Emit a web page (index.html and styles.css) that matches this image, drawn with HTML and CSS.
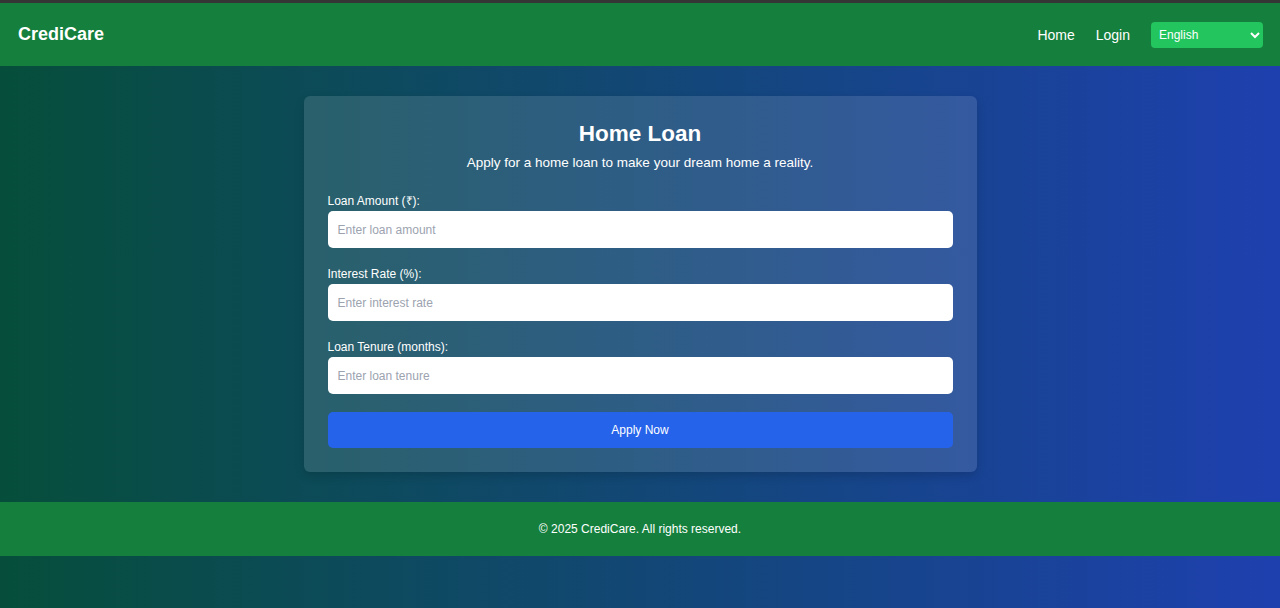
FILE: index.html
```html
<!DOCTYPE html>
<html lang="en">
<head>
<meta charset="utf-8">
<title>Home Loan - CrediCare</title>
<link rel="stylesheet" href="styles.css">
</head>
<body>
<header class="site-header">
  <div class="brand">CrediCare</div>
  <nav class="nav">
    <a href="#" class="nav-link">Home</a>
    <a href="#" class="nav-link">Login</a>
    <select class="lang">
      <option>English</option>
      <option>हिन्दी</option>
    </select>
  </nav>
</header>
<main class="main">
  <section class="card">
    <h1 class="title">Home Loan</h1>
    <p class="subtitle">Apply for a home loan to make your dream home a reality.</p>
    <form class="form">
      <div class="field">
        <label class="label">Loan Amount (₹):</label>
        <input class="input" type="number" placeholder="Enter loan amount">
      </div>
      <div class="field">
        <label class="label">Interest Rate (%):</label>
        <input class="input" type="number" placeholder="Enter interest rate">
      </div>
      <div class="field">
        <label class="label">Loan Tenure (months):</label>
        <input class="input" type="number" placeholder="Enter loan tenure">
      </div>
      <button type="button" class="btn">Apply Now</button>
    </form>
  </section>
</main>
<footer class="site-footer">© 2025 CrediCare. All rights reserved.</footer>
</body>
</html>
```
FILE: styles.css
```css
* { box-sizing: border-box; }
html { min-height: 100%; background: linear-gradient(to right, #064e3b, #1e40af); }
body {
  margin: 0;
  font-family: "Liberation Sans", Arial, sans-serif;
  color: #fff;
  border-top: 3px solid #353535;
}
.site-header {
  height: 63px;
  background: #15803d;
  display: flex;
  align-items: center;
  justify-content: space-between;
  padding: 0 17px 0 18px;
}
.brand { font-size: 18px; font-weight: bold; }
.nav { display: flex; align-items: center; gap: 21px; }
.nav-link { color: #fff; text-decoration: none; font-size: 14px; }
.lang {
  width: 112px;
  height: 26px;
  background-color: #22c55e;
  color: #fff;
  border: none;
  border-radius: 4px;
  font-family: "Liberation Sans", Arial, sans-serif;
  font-size: 12px;
  padding: 0 4px;
}
.main { padding: 30px 0; display: flex; justify-content: center; }
.card {
  width: 673px;
  background: rgba(255, 255, 255, 0.12);
  border-radius: 6px;
  padding: 24px;
  box-shadow: 0 4px 10px rgba(0, 0, 0, 0.15);
}
.title { margin: 0; font-size: 22.5px; line-height: 28px; text-align: center; font-weight: bold; }
.subtitle { margin: 5px 0 20px; font-size: 13.5px; line-height: 20px; text-align: center; }
.form { display: flex; flex-direction: column; }
.field { display: flex; flex-direction: column; margin-bottom: 18px; }
.label { font-size: 12px; line-height: 16px; margin-bottom: 2px; }
.input {
  height: 37px;
  border: none;
  border-radius: 5px;
  background: #fff;
  padding: 0 10px;
  font-family: "Liberation Sans", Arial, sans-serif;
  font-size: 12px;
  color: #111;
}
.input::placeholder { color: #9ca3af; }
.btn {
  height: 36px;
  border: none;
  border-radius: 5px;
  background: #2563eb;
  color: #fff;
  font-family: "Liberation Sans", Arial, sans-serif;
  font-size: 12px;
}
.site-footer {
  height: 54px;
  background: #15803d;
  display: flex;
  align-items: center;
  justify-content: center;
  font-size: 12px;
}
```
